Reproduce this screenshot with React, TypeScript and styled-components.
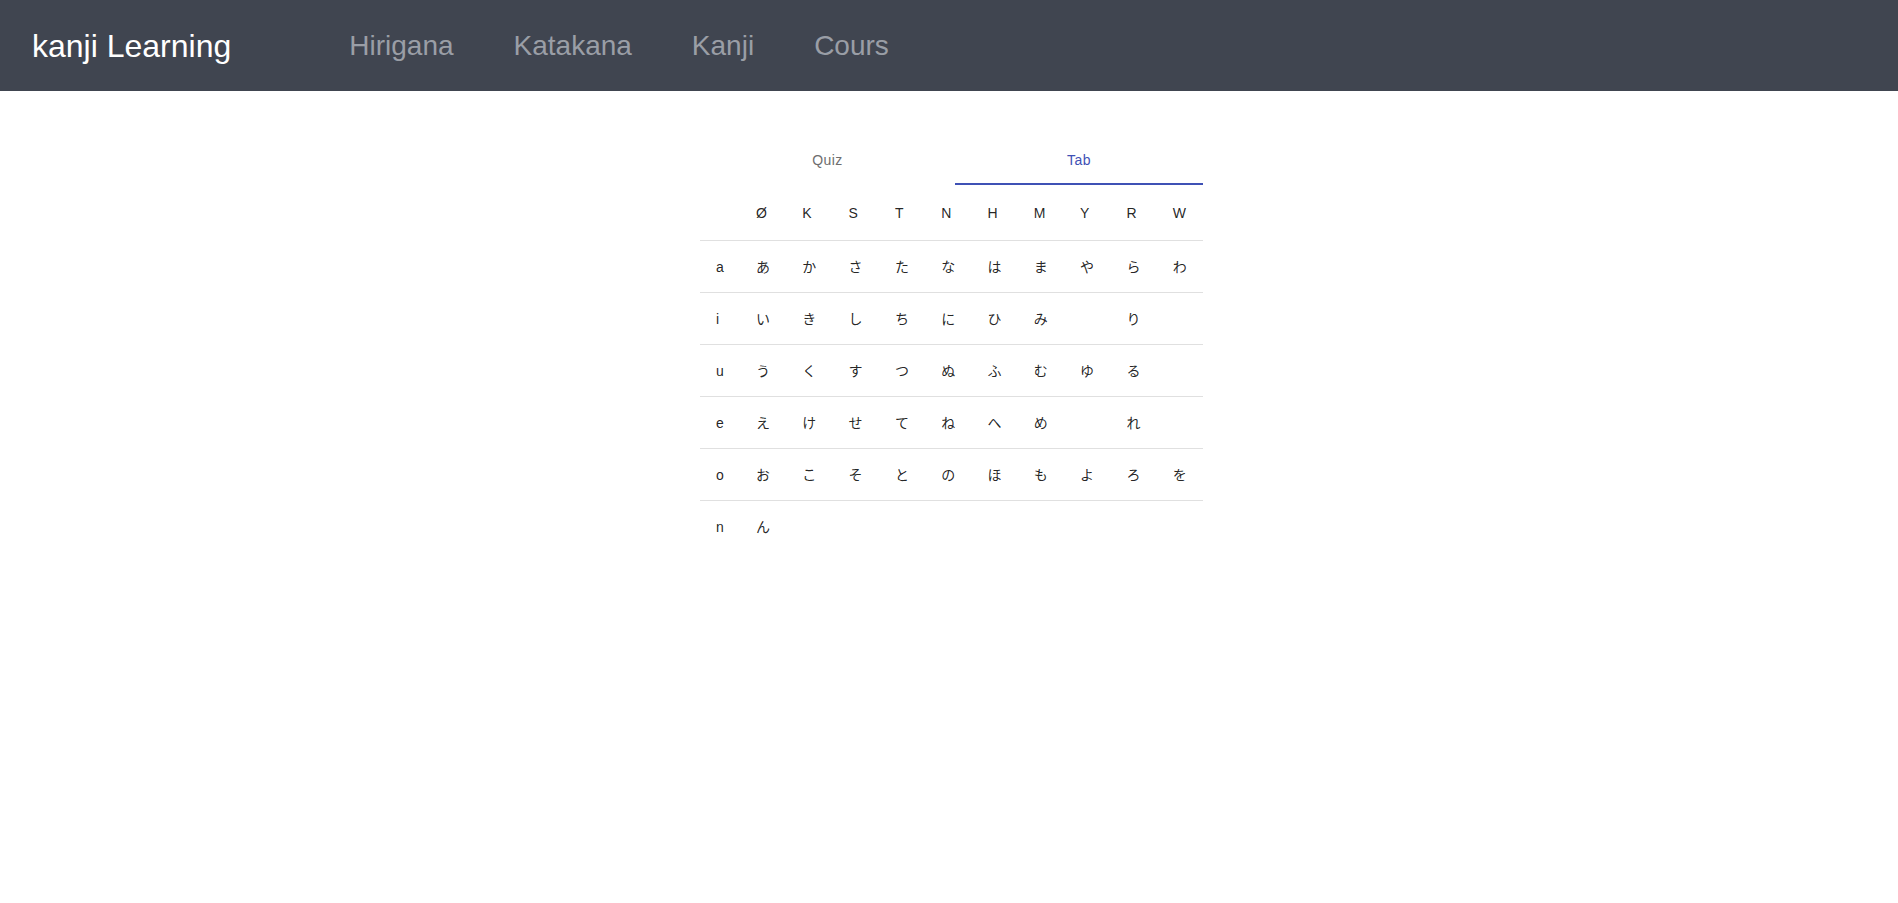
import React, { useState } from 'react'
import styled, { createGlobalStyle } from 'styled-components'

const GlobalStyle = createGlobalStyle`
    html, body {
        margin: 0;
        padding: 0;
        background: #ffffff;
        font-family: "Liberation Sans", "Noto Sans CJK JP", Arial, sans-serif;
    }
`

const columns = ['Ø', 'K', 'S', 'T', 'N', 'H', 'M', 'Y', 'R', 'W']

const rows: { vowel: string; kana: string[] }[] = [
    { vowel: 'a', kana: ['あ', 'か', 'さ', 'た', 'な', 'は', 'ま', 'や', 'ら', 'わ'] },
    { vowel: 'i', kana: ['い', 'き', 'し', 'ち', 'に', 'ひ', 'み', '', 'り', ''] },
    { vowel: 'u', kana: ['う', 'く', 'す', 'つ', 'ぬ', 'ふ', 'む', 'ゆ', 'る', ''] },
    { vowel: 'e', kana: ['え', 'け', 'せ', 'て', 'ね', 'へ', 'め', '', 'れ', ''] },
    { vowel: 'o', kana: ['お', 'こ', 'そ', 'と', 'の', 'ほ', 'も', 'よ', 'ろ', 'を'] },
    { vowel: 'n', kana: ['ん'] },
]

const links = ['Hirigana', 'Katakana', 'Kanji', 'Cours']

export default function App() {
    const [tab, setTab] = useState(1)

    return (
        <>
            <GlobalStyle />
            <Navbar>
                <Brand>kanji Learning</Brand>
                <NavLinks>
                    {links.map(l => (
                        <NavLink key={l}>{l}</NavLink>
                    ))}
                </NavLinks>
            </Navbar>

            <Main>
                <Panel>
                    <TabBar>
                        <TabButton $active={tab === 0} onClick={() => setTab(0)}>Quiz</TabButton>
                        <TabButton $active={tab === 1} onClick={() => setTab(1)}>Tab</TabButton>
                    </TabBar>

                    <KanaTable>
                        <HeadRow>
                            <Cell />
                            {columns.map(c => (
                                <Cell key={c}>{c}</Cell>
                            ))}
                        </HeadRow>
                        {rows.map((r, i) => (
                            <BodyRow key={r.vowel} $last={i === rows.length - 1}>
                                <Cell>{r.vowel}</Cell>
                                {columns.map((c, j) => (
                                    <Cell key={c}>{r.kana[j] || ''}</Cell>
                                ))}
                            </BodyRow>
                        ))}
                    </KanaTable>
                </Panel>
            </Main>
        </>
    )
}

const Navbar = styled.nav`
    height: 91px;
    display: flex;
    align-items: center;
    padding-left: 32px;
    background: #404550;
`

const Brand = styled.a`
    font-size: 32px;
    color: #ffffff;
    white-space: nowrap;
    padding-top: 1px;
`

const NavLinks = styled.ul`
    display: flex;
    margin: 0 0 0 88px;
    padding: 0;
    list-style: none;
`

const NavLink = styled.li`
    padding: 0 30px;
    font-size: 28px;
    color: #9a9ea6;
    cursor: pointer;
`

const Main = styled.main`
    display: flex;
    justify-content: center;
    padding: 45px 0 0 5px;
`

const Panel = styled.section`
    width: 503px;
`

const TabBar = styled.div`
    display: grid;
    grid-template-columns: 255px 248px;
`

const TabButton = styled.button<{ $active: boolean }>`
    height: 49px;
    border: none;
    border-bottom: 2px solid ${p => (p.$active ? '#3f51b5' : 'transparent')};
    background: none;
    font-family: inherit;
    font-size: 14px;
    letter-spacing: 0.4px;
    color: ${p => (p.$active ? '#3f51b5' : '#6e6e6e')};
    padding: 1px 0 0;
    cursor: pointer;
`

const KanaTable = styled.div`
    display: flex;
    flex-direction: column;
    font-size: 14px;
    color: rgba(0, 0, 0, 0.87);
`

const HeadRow = styled.div`
    display: grid;
    grid-template-columns: 40px repeat(10, 1fr);
    align-items: center;
    height: 55px;
    border-bottom: 1px solid #e0e0e0;
`

const BodyRow = styled.div<{ $last: boolean }>`
    display: grid;
    grid-template-columns: 40px repeat(10, 1fr);
    align-items: center;
    height: 51px;
    border-bottom: 1px solid ${p => (p.$last ? 'transparent' : '#e0e0e0')};
`

const Cell = styled.div`
    padding-left: 16px;
    line-height: 20px;
    white-space: nowrap;
`
